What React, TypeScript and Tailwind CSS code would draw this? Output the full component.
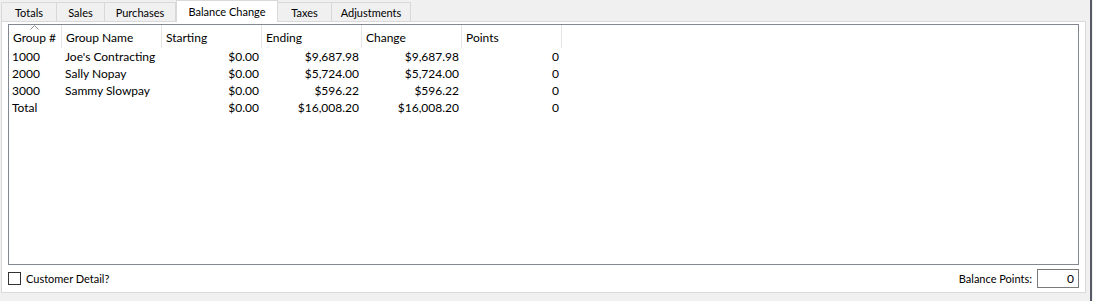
import { Fragment } from 'react'

const tabs = ['Totals', 'Sales', 'Purchases', 'Balance Change', 'Taxes', 'Adjustments']
const tabWidths = ['w-[56px]', 'w-[49px]', 'w-[72px]', 'w-[102px]', 'w-[55px]', 'w-[80px]']

const cols = [
  { label: 'Group #', w: 'w-[53px]' },
  { label: 'Group Name', w: 'w-[100px]' },
  { label: 'Starting', w: 'w-[100px]' },
  { label: 'Ending', w: 'w-[100px]' },
  { label: 'Change', w: 'w-[100px]' },
  { label: 'Points', w: 'w-[100px]' },
]

const rows = [
  ['1000', "Joe's Contracting", '$0.00', '$9,687.98', '$9,687.98', '0'],
  ['2000', 'Sally Nopay', '$0.00', '$5,724.00', '$5,724.00', '0'],
  ['3000', 'Sammy Slowpay', '$0.00', '$596.22', '$596.22', '0'],
  ['Total', '', '$0.00', '$16,008.20', '$16,008.20', '0'],
]

export default function App() {
  return (
    <div
      className="w-[1093px] h-[301px] bg-[#f0f0f0] flex text-[11px] text-black overflow-hidden"
      style={{ fontFamily: 'Lato, "Noto Sans", sans-serif' }}>
      <div className="w-[1086px] flex flex-col">
        {/* tab strip */}
        <div className="h-[21px] flex items-end pl-[1px] relative z-10">
          {tabs.map((t, i) =>
            i === 3 ? (
              <div
                key={t}
                className={`${tabWidths[i]} h-[22px] -mb-[1px] bg-white border border-b-0 border-[#d9d9d9] flex items-center justify-center leading-none pb-[1px]`}>
                {t}
              </div>
            ) : (
              <div
                key={t}
                className={`${tabWidths[i]} h-[19px] bg-[#f0f0f0] border border-b-0 border-[#d9d9d9] -ml-[1px] first:ml-0 flex items-center justify-center leading-none pt-[1px]`}>
                {t}
              </div>
            )
          )}
        </div>

        {/* panel */}
        <div className="h-[272px] bg-white border border-[#d9d9d9] ml-[1px] flex flex-col px-[6px] pt-[2px]">
          <div className="h-[241px] border border-[#828790] flex flex-col text-[12px]">
            <div className="h-[23px] flex relative">
              <svg
                className="absolute left-[21px] top-[0px]"
                width="9"
                height="5"
                viewBox="0 0 9 5">
                <path d="M0.5 4.5 L4.5 0.5 L8.5 4.5" fill="none" stroke="#909090" strokeWidth="1" />
              </svg>
              {cols.map((c) => (
                <div
                  key={c.label}
                  className={`${c.w} h-full border-r border-[#e5e5e5] flex items-center pl-[4px] pt-[3px] leading-none`}>
                  {c.label}
                </div>
              ))}
            </div>
            <div className="grid grid-cols-[53px_100px_100px_100px_100px_100px] w-fit">
              {rows.map((r) => (
                <Fragment key={r[0]}>
                  {r.map((cell, j) => (
                    <div
                      key={j}
                      className={`h-[17px] flex items-center leading-none ${
                        j < 2 ? 'pl-[3px] justify-start' : 'pr-[3px] justify-end'
                      }`}>
                      {cell}
                    </div>
                  ))}
                </Fragment>
              ))}
            </div>
          </div>

          <div className="flex-1 flex items-center justify-between">
            <div className="flex items-center gap-[5px]">
              <div className="w-[13px] h-[13px] border border-[#333333] bg-white" />
              <span className="leading-none">Customer Detail?</span>
            </div>
            <div className="flex items-center gap-[5px]">
              <span className="leading-none">Balance Points:</span>
              <div className="w-[42px] h-[19px] border border-[#7a7a7a] bg-white flex items-center justify-end pr-[4px] leading-none text-[12px]">
                0
              </div>
            </div>
          </div>
        </div>
      </div>
      <div className="w-[4px]" />
      <div className="w-[2px] bg-[#555a66]" />
    </div>
  )
}
